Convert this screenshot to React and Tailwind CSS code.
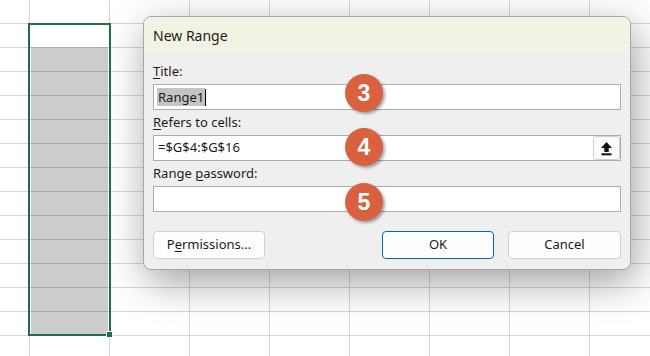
import React from "react";

const ROWS = 15;
const COLS = 9;

function U({ children }) {
  return <span className="underline underline-offset-2 decoration-1">{children}</span>;
}

function Badge({ n, top }) {
  return (
    <div
      className="absolute left-[345px] w-[38px] h-[38px] rounded-full bg-[#d9613f] flex items-center justify-center text-white text-[23px] font-bold shadow-[2px_2px_3px_rgba(0,0,0,0.35)]"
      style={{ top, fontFamily: '"Liberation Sans", Arial, sans-serif' }}
    >
      {n}
    </div>
  );
}

export default function App() {
  const font = { fontFamily: '"Noto Sans", "Segoe UI", sans-serif' };
  return (
    <div className="relative w-[650px] h-[356px] overflow-hidden bg-white" style={font}>
      {/* grid */}
      <div className="flex flex-col">
        {Array.from({ length: ROWS }).map((_, r) => (
          <div key={r} className="flex">
            {Array.from({ length: COLS }).map((_, c) => (
              <div
                key={c}
                className={
                  "h-6 shrink-0 border-r border-b border-[#d6d6d6] " +
                  (c === 0 ? "w-[30px]" : "w-20")
                }
              />
            ))}
          </div>
        ))}
      </div>

      {/* selection */}
      <div className="absolute left-[28px] top-[23px] w-[83px] h-[313px] border-2 border-[#1e6e42] flex flex-col">
        <div className="h-[22px] mx-px bg-white shrink-0" />
        <div className="flex-1 mx-px bg-[rgba(0,0,0,0.2)]" />
      </div>
      <div className="absolute left-[106px] top-[331px] w-[7px] h-[7px] bg-[#1e6e42] border border-white" />

      {/* dialog */}
      <div className="absolute left-[143px] top-[16px] w-[488px] h-[254px] rounded-lg border border-[#a7a7a7] bg-[#efefef] overflow-hidden shadow-[4px_12px_40px_rgba(0,0,0,0.38)] flex flex-col">
        <div className="h-9 shrink-0 bg-[#f3f3e5] flex items-center pl-[9px] text-[14px] text-[#1b1b1b]">
          New Range
        </div>
        <div className="flex flex-col px-[9px] pt-[6px] text-[13px] text-[#1b1b1b]">
          <div className="h-[25px] flex items-center">
            <span><U>T</U>itle:</span>
          </div>
          <div className="h-[26px] border border-[#ababab] bg-white flex items-center pl-[3px]">
            <span className="bg-[#c4c4c4] px-px leading-[18px]">Range1</span>
            <span className="w-px h-[17px] bg-black" />
          </div>
          <div className="h-[25px] flex items-center">
            <span><U>R</U>efers to cells:</span>
          </div>
          <div className="h-[26px] border border-[#ababab] bg-white flex items-center justify-between pl-[4px]">
            <span>=$G$4:$G$16</span>
            <div className="w-[27px] h-[24px] rounded-[3px] border border-[#d0d0d0] bg-[#fbfbfb] flex items-center justify-center">
              <svg width="13" height="15" viewBox="0 0 13 15">
                <path d="M6.5 1 L12 7 H8.7 V11 H4.3 V7 H1 Z" fill="#111" />
                <rect x="1.5" y="12.3" width="10" height="2" fill="#111" />
              </svg>
            </div>
          </div>
          <div className="h-[25px] flex items-center">
            <span>Range <U>p</U>assword:</span>
          </div>
          <div className="h-[26px] border border-[#ababab] bg-white" />
          <div className="mt-[19px] h-7 flex items-center">
            <button className="w-[112px] h-7 rounded-[4px] border border-[#d0d0d0] bg-[#fdfdfd] text-[13px] text-[#1b1b1b]">
              P<U>e</U>rmissions...
            </button>
            <div className="flex-1" />
            <button className="w-[112px] h-7 rounded-[4px] border border-[#0067c0] bg-[#fdfdfd] text-[13px] text-[#1b1b1b]">
              OK
            </button>
            <button className="ml-[14px] w-[113px] h-7 rounded-[4px] border border-[#d0d0d0] bg-[#fdfdfd] text-[13px] text-[#1b1b1b]">
              Cancel
            </button>
          </div>
        </div>
      </div>

      <Badge n="3" top={74} />
      <Badge n="4" top={128} />
      <Badge n="5" top={183} />
    </div>
  );
}
